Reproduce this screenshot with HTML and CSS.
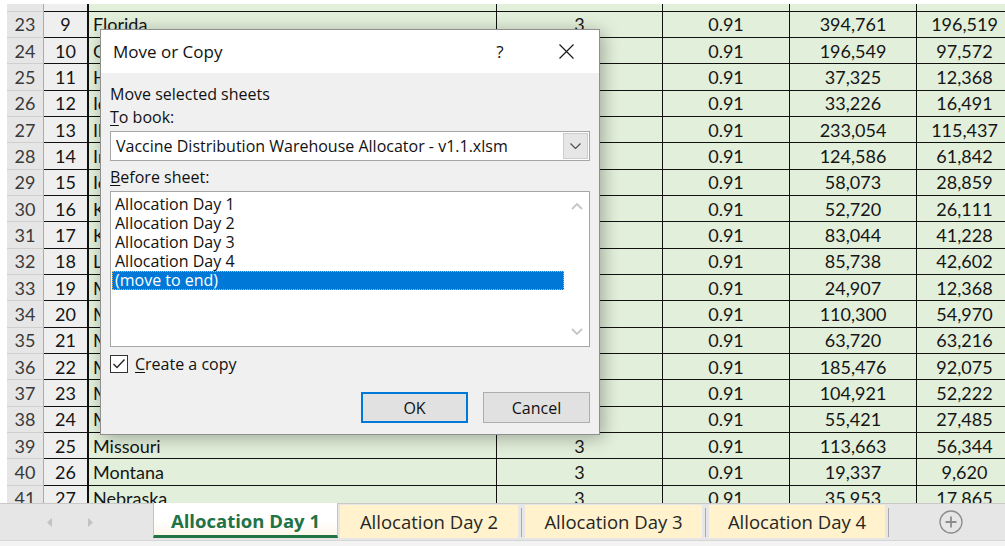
FILE: index.html
```html
<!DOCTYPE html>
<html lang="en">
<head>
<meta charset="utf-8">
<title>Vaccine Distribution Warehouse Allocator - v1.1.xlsm</title>
<link rel="stylesheet" href="styles.css">
</head>
<body>
<div class="workbook">
  <div class="top-edge"></div>
  <div class="viewport">
    <div class="sheet">
      <div class="row scrolled-past"><span class="rh">22</span><span class="idx">8</span><span class="name">Delaware</span><span>3</span><span>0.91</span><span>58,207</span><span>29,456</span></div>
      <div class="row"><span class="rh">23</span><span class="idx">9</span><span class="name">Florida</span><span>3</span><span>0.91</span><span>394,761</span><span>196,519</span></div>
      <div class="row"><span class="rh">24</span><span class="idx">10</span><span class="name">Georgia</span><span>3</span><span>0.91</span><span>196,549</span><span>97,572</span></div>
      <div class="row"><span class="rh">25</span><span class="idx">11</span><span class="name">Hawaii</span><span>3</span><span>0.91</span><span>37,325</span><span>12,368</span></div>
      <div class="row"><span class="rh">26</span><span class="idx">12</span><span class="name">Idaho</span><span>3</span><span>0.91</span><span>33,226</span><span>16,491</span></div>
      <div class="row"><span class="rh">27</span><span class="idx">13</span><span class="name">Illinois</span><span>3</span><span>0.91</span><span>233,054</span><span>115,437</span></div>
      <div class="row"><span class="rh">28</span><span class="idx">14</span><span class="name">Indiana</span><span>3</span><span>0.91</span><span>124,586</span><span>61,842</span></div>
      <div class="row"><span class="rh">29</span><span class="idx">15</span><span class="name">Iowa</span><span>3</span><span>0.91</span><span>58,073</span><span>28,859</span></div>
      <div class="row"><span class="rh">30</span><span class="idx">16</span><span class="name">Kansas</span><span>3</span><span>0.91</span><span>52,720</span><span>26,111</span></div>
      <div class="row"><span class="rh">31</span><span class="idx">17</span><span class="name">Kentucky</span><span>3</span><span>0.91</span><span>83,044</span><span>41,228</span></div>
      <div class="row"><span class="rh">32</span><span class="idx">18</span><span class="name">Louisiana</span><span>3</span><span>0.91</span><span>85,738</span><span>42,602</span></div>
      <div class="row"><span class="rh">33</span><span class="idx">19</span><span class="name">Maine</span><span>3</span><span>0.91</span><span>24,907</span><span>12,368</span></div>
      <div class="row"><span class="rh">34</span><span class="idx">20</span><span class="name">Maryland</span><span>3</span><span>0.91</span><span>110,300</span><span>54,970</span></div>
      <div class="row"><span class="rh">35</span><span class="idx">21</span><span class="name">Massachusetts</span><span>3</span><span>0.91</span><span>63,720</span><span>63,216</span></div>
      <div class="row"><span class="rh">36</span><span class="idx">22</span><span class="name">Michigan</span><span>3</span><span>0.91</span><span>185,476</span><span>92,075</span></div>
      <div class="row"><span class="rh">37</span><span class="idx">23</span><span class="name">Minnesota</span><span>3</span><span>0.91</span><span>104,921</span><span>52,222</span></div>
      <div class="row"><span class="rh">38</span><span class="idx">24</span><span class="name">Mississippi</span><span>3</span><span>0.91</span><span>55,421</span><span>27,485</span></div>
      <div class="row"><span class="rh">39</span><span class="idx">25</span><span class="name">Missouri</span><span>3</span><span>0.91</span><span>113,663</span><span>56,344</span></div>
      <div class="row"><span class="rh">40</span><span class="idx">26</span><span class="name">Montana</span><span>3</span><span>0.91</span><span>19,337</span><span>9,620</span></div>
      <div class="row"><span class="rh">41</span><span class="idx">27</span><span class="name">Nebraska</span><span>3</span><span>0.91</span><span>35,953</span><span>17,865</span></div>
    </div>
  </div>

  <div class="tabbar">
    <div class="tab-nav">
      <svg class="nav-arrow" width="5" height="9" viewBox="0 0 5 9"><path d="M5 0 L0 4.5 L5 9 Z"/></svg>
      <svg class="nav-arrow" width="5" height="9" viewBox="0 0 5 9"><path d="M0 0 L5 4.5 L0 9 Z"/></svg>
    </div>
    <div class="tab active">Allocation Day 1</div>
    <div class="tab t2">Allocation Day 2</div>
    <span class="tab-sep"></span>
    <div class="tab t3">Allocation Day 3</div>
    <span class="tab-sep"></span>
    <div class="tab t4">Allocation Day 4</div>
    <span class="tab-sep"></span>
    <svg class="new-sheet" width="24" height="24" viewBox="0 0 24 24">
      <circle cx="12" cy="12" r="11" fill="none" stroke="#8c8c8c" stroke-width="1.3"/>
      <path d="M12 6.5 V17.5 M6.5 12 H17.5" stroke="#8c8c8c" stroke-width="1.8"/>
    </svg>
  </div>
  <div class="status-edge"></div>
</div>

<div class="dialog" role="dialog" aria-label="Move or Copy">
  <div class="titlebar">
    <span class="title">Move or Copy</span>
    <span class="help">?</span>
    <span class="close">
      <svg width="15" height="15" viewBox="0 0 15 15"><path d="M0.5 0.5 L14.5 14.5 M14.5 0.5 L0.5 14.5" stroke="#1a1a1a" stroke-width="1.2"/></svg>
    </span>
  </div>
  <div class="dlg-body">
    <div class="label">Move selected sheets</div>
    <div class="label second"><u>T</u>o book:</div>
    <div class="combo">
      <span class="combo-text">Vaccine Distribution Warehouse Allocator - v1.1.xlsm</span>
      <span class="combo-drop">
        <svg width="11" height="6" viewBox="0 0 11 6"><path d="M0.5 0.5 L5.5 5.5 L10.5 0.5" fill="none" stroke="#505050" stroke-width="1.2"/></svg>
      </span>
    </div>
    <div class="label before"><u>B</u>efore sheet:</div>
    <div class="listbox">
      <div class="items">
        <div class="item">Allocation Day 1</div>
        <div class="item">Allocation Day 2</div>
        <div class="item">Allocation Day 3</div>
        <div class="item">Allocation Day 4</div>
        <div class="item selected">(move to end)</div>
      </div>
      <div class="vscroll">
        <svg width="12" height="7" viewBox="0 0 12 7"><path d="M1 6 L6 1 L11 6" fill="none" stroke="#c6c6c6" stroke-width="1.8"/></svg>
        <svg width="12" height="7" viewBox="0 0 12 7"><path d="M1 1 L6 6 L11 1" fill="none" stroke="#c6c6c6" stroke-width="1.8"/></svg>
      </div>
    </div>
    <label class="check">
      <span class="box"><svg width="14" height="14" viewBox="0 0 14 14"><path d="M1.5 7 L5 10.5 L12.5 2.5" fill="none" stroke="#262626" stroke-width="1.4"/></svg></span>
      <span><u>C</u>reate a copy</span>
    </label>
    <div class="buttons">
      <button class="btn default">OK</button>
      <button class="btn">Cancel</button>
    </div>
  </div>
</div>
</body>
</html>
```

FILE: styles.css
```css
* {
  box-sizing: border-box;
}

html,
body {
  margin: 0;
  padding: 0;
}

body {
  width: 1005px;
  height: 546px;
  overflow: hidden;
  position: relative;
  background: #fff;
  font-family: Lato, "Liberation Sans", sans-serif;
}

/* ---------- worksheet ---------- */

.workbook {
  display: flex;
  flex-direction: column;
  height: 546px;
}

.top-edge {
  position: relative;
  z-index: 1;
  flex: none;
  height: 4px;
  background: #fff;
}

.viewport {
  flex: none;
  height: 499px;
  overflow: hidden;
  padding-left: 7px;
}

.sheet {
  margin-top: -18.5px;
}

.row {
  display: grid;
  grid-template-columns: 37px 45px 408px 166px 127px 127px 96px;
  height: 26.333px;
}

.row > span {
  display: flex;
  align-items: center;
  justify-content: center;
  overflow: hidden;
  white-space: nowrap;
  font-size: 18px;
  color: #151515;
  background: #e2efda;
  border-right: 1px solid #111;
  border-bottom: 1px solid #111;
}

/* the row scrolled mostly out of view: its text sits under the top edge */
.row.scrolled-past > span {
  padding-bottom: 8px;
}

.row > .rh {
  background: #e6e6e6;
  color: #3a3a3a;
  border-right-color: #ababab;
  border-bottom-color: #cfcfcf;
}

.row > .idx {
  background: #efefef;
  border-right-width: 2px;
}

.row > .name {
  justify-content: flex-start;
  padding-left: 4px;
}

/* ---------- sheet tabs ---------- */

.tabbar {
  flex: none;
  height: 37px;
  display: flex;
  align-items: flex-start;
  background: #e6e6e6;
  border-top: 1px solid #c8c8c8;
  font-family: "Open Sans", "Noto Sans", sans-serif;
}

.tab-nav {
  width: 153px;
  height: 36px;
  display: flex;
  align-items: center;
  gap: 36px;
  padding-left: 47px;
}

.nav-arrow {
  fill: #c2c2c2;
}

.tab {
  display: flex;
  align-items: center;
  justify-content: center;
  font-size: 18.5px;
  color: #262626;
  white-space: nowrap;
}

.tab.active {
  width: 185px;
  height: 35px;
  margin-top: -1px;
  padding-top: 3px;
  font-weight: 700;
  color: #217346;
  background: linear-gradient(#fff 55%, #fdf7ea);
  border-left: 1px solid #c4c4c4;
  border-right: 1px solid #c4c4c4;
  border-bottom: 3px solid #217346;
}

.tab.t2,
.tab.t3,
.tab.t4 {
  height: 33px;
  margin-top: 1px;
  background: #fff2cc;
}

.tab.t2 {
  width: 178px;
  margin-left: 2px;
}

.tab.t3 {
  width: 177px;
}

.tab.t4 {
  width: 176px;
}

.tab-sep {
  width: 1px;
  height: 29px;
  margin: 4px 3px 0;
  background: #a9a9a9;
}

.new-sheet {
  margin: 6px 0 0 47px;
}

.status-edge {
  flex: none;
  height: 6px;
  background: #f3f3f3;
  border-top: 1px solid #d6d6d6;
}

/* ---------- Move or Copy dialog ---------- */

.dialog {
  position: absolute;
  z-index: 2;
  left: 100px;
  top: 29px;
  width: 500px;
  height: 406px;
  background: #f0f0f0;
  border: 1px solid #8f8f8f;
  box-shadow: 3px 3px 16px rgba(0, 0, 0, 0.3);
  font-family: "Open Sans", "Noto Sans", sans-serif;
  font-size: 16px;
  color: #111;
  display: flex;
  flex-direction: column;
}

.titlebar {
  flex: none;
  height: 43px;
  background: #fff;
  display: flex;
  align-items: center;
  padding-left: 12px;
  padding-bottom: 1px;
}

.title {
  font-size: 17px;
  flex: 1;
}

.help {
  font-size: 17px;
  width: 20px;
  text-align: center;
  margin-right: 49px;
}

.close {
  display: flex;
  width: 15px;
  margin-right: 25px;
}

.dlg-body {
  flex: 1;
  padding: 11px 9px 0;
  display: flex;
  flex-direction: column;
}

.label {
  height: 20px;
  line-height: 20px;
  white-space: nowrap;
}

.label.second {
  margin-top: 3px;
}

.label.before {
  margin-top: 6px;
}

u {
  text-decoration-thickness: 1px;
  text-underline-offset: 2px;
}

.combo {
  margin-top: 4px;
  height: 30px;
  display: flex;
  align-items: stretch;
  background: #fff;
  border: 1px solid #a6a6a6;
}

.combo-text {
  flex: 1;
  display: flex;
  align-items: center;
  padding-left: 5px;
  white-space: nowrap;
  overflow: hidden;
}

.combo-drop {
  width: 25px;
  margin: 1px;
  display: flex;
  align-items: center;
  justify-content: center;
  background: #e6e6e6;
  border: 1px solid #cdcdcd;
}

.listbox {
  margin-top: 4px;
  height: 156px;
  display: flex;
  background: #fff;
  border: 1px solid #a6a6a6;
}

.items {
  flex: 1;
  padding: 3px 1px 0 1px;
}

.item {
  height: 19px;
  line-height: 19px;
  padding-left: 3px;
  white-space: nowrap;
}

.item.selected {
  background: #0078d7;
  color: #fff;
  outline: 1px dotted #f0b060;
  outline-offset: -1px;
}

.vscroll {
  width: 24px;
  display: flex;
  flex-direction: column;
  justify-content: space-between;
  align-items: center;
  padding: 11px 0 11px;
}

.check {
  margin-top: 8px;
  height: 18px;
  display: flex;
  align-items: center;
  gap: 7px;
}

.box {
  width: 18px;
  height: 18px;
  display: flex;
  align-items: center;
  justify-content: center;
  background: #fff;
  border: 1px solid #333;
}

.buttons {
  margin-top: 19px;
  display: flex;
  justify-content: flex-end;
  gap: 15px;
}

.btn {
  width: 107px;
  height: 31px;
  font-family: inherit;
  font-size: 16px;
  color: #111;
  background: #e1e1e1;
  border: 1px solid #adadad;
  padding: 0;
}

.btn.default {
  border: 2px solid #0078d7;
}
```
